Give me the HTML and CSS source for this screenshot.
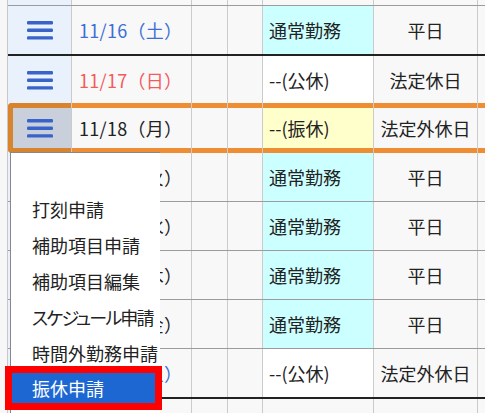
FILE: index.html
```html
<!DOCTYPE html>
<html lang="ja">
<head>
    <meta charset="UTF-8">
    <meta name="viewport" content="width=device-width, initial-scale=1">
    <title>勤務表</title>
    <link rel="stylesheet" href="styles.css">
</head>
<body>
    <div class="sheet">
        <div class="row edge-top">
            <div class="cell menu-btn"></div>
            <div class="cell"></div><div class="cell"></div><div class="cell"></div>
            <div class="cell"></div><div class="cell"></div><div class="cell"></div>
        </div>

        <div class="row week-end">
            <div class="cell menu-btn"><svg class="burger" width="26" height="19" viewBox="0 0 26 19"><rect y="0" width="26" height="3.4" rx="1.2"/><rect y="7.6" width="26" height="3.4" rx="1.2"/><rect y="15.2" width="26" height="3.4" rx="1.2"/></svg></div>
            <div class="cell date sat">11/16（土）</div>
            <div class="cell"></div><div class="cell"></div>
            <div class="cell work normal">通常勤務</div>
            <div class="cell type">平日</div>
            <div class="cell"></div>
        </div>

        <div class="row before-selected">
            <div class="cell menu-btn"><svg class="burger" width="26" height="19" viewBox="0 0 26 19"><rect y="0" width="26" height="3.4" rx="1.2"/><rect y="7.6" width="26" height="3.4" rx="1.2"/><rect y="15.2" width="26" height="3.4" rx="1.2"/></svg></div>
            <div class="cell date sun">11/17（日）</div>
            <div class="cell"></div><div class="cell"></div>
            <div class="cell work off">--(公休)</div>
            <div class="cell type">法定休日</div>
            <div class="cell"></div>
        </div>

        <div class="row selected">
            <div class="cell menu-btn"><svg class="burger" width="26" height="19" viewBox="0 0 26 19"><rect y="0" width="26" height="3.4" rx="1.2"/><rect y="7.6" width="26" height="3.4" rx="1.2"/><rect y="15.2" width="26" height="3.4" rx="1.2"/></svg></div>
            <div class="cell date">11/18（月）</div>
            <div class="cell"></div><div class="cell"></div>
            <div class="cell work sub">--(振休)</div>
            <div class="cell type">法定外休日</div>
            <div class="cell"></div>
        </div>

        <div class="row">
            <div class="cell menu-btn"></div>
            <div class="cell date">11/19（火）</div>
            <div class="cell"></div><div class="cell"></div>
            <div class="cell work normal">通常勤務</div>
            <div class="cell type">平日</div>
            <div class="cell"></div>
        </div>

        <div class="row">
            <div class="cell menu-btn"></div>
            <div class="cell date">11/20（水）</div>
            <div class="cell"></div><div class="cell"></div>
            <div class="cell work normal">通常勤務</div>
            <div class="cell type">平日</div>
            <div class="cell"></div>
        </div>

        <div class="row">
            <div class="cell menu-btn"></div>
            <div class="cell date">11/21（木）</div>
            <div class="cell"></div><div class="cell"></div>
            <div class="cell work normal">通常勤務</div>
            <div class="cell type">平日</div>
            <div class="cell"></div>
        </div>

        <div class="row">
            <div class="cell menu-btn"></div>
            <div class="cell date">11/22（金）</div>
            <div class="cell"></div><div class="cell"></div>
            <div class="cell work normal">通常勤務</div>
            <div class="cell type">平日</div>
            <div class="cell"></div>
        </div>

        <div class="row week-end">
            <div class="cell menu-btn"></div>
            <div class="cell date sat">11/23（土）</div>
            <div class="cell"></div><div class="cell"></div>
            <div class="cell work off">--(公休)</div>
            <div class="cell type">法定外休日</div>
            <div class="cell"></div>
        </div>

        <div class="row">
            <div class="cell menu-btn"></div>
            <div class="cell"></div><div class="cell"></div><div class="cell"></div>
            <div class="cell"></div><div class="cell"></div><div class="cell"></div>
        </div>
    </div>

    <!-- 11/18 の行メニュー -->
    <div class="menu">
        <div class="menu-item">打刻申請</div>
        <div class="menu-item">補助項目申請</div>
        <div class="menu-item">補助項目編集</div>
        <div class="menu-item tight">スケジュール申請</div>
        <div class="menu-item">時間外勤務申請</div>
        <div class="menu-item active">振休申請</div>
    </div>
</body>
</html>
```

FILE: styles.css
```css
body {
    margin: 0;
    background-color: #f7f7f7;
    font-family: "Noto Sans CJK JP", "Noto Sans", sans-serif;
    font-size: 18px;
    color: #222;
    overflow: hidden;
}
.sheet {
    margin-left: 7px;
    width: 560px;
    border-left: 1px solid #c8c8c8;
}
.row {
    display: grid;
    grid-template-columns: 64px 120px 36px 35px 111px 104px 1fr;
    height: 49px;
    border-bottom: 1px solid #9c9c9c;
    box-sizing: border-box;
}
.row.edge-top {
    height: 6px;
}
.row.week-end {
    height: 50px;
    border-bottom: 2px solid #222;
}
.row.before-selected {
    height: 47px;
    border-bottom: none;
}
.row.selected {
    height: 50px;
    border-bottom: none;
}
.cell {
    display: flex;
    align-items: center;
    min-width: 0;
    white-space: nowrap;
    overflow: hidden;
    background-color: #f8f8f8;
    border-right: 1px solid #cbcbcb;
}
.menu-btn {
    justify-content: center;
    background-color: #e9f1fd;
}
.burger {
    fill: #3a63c9;
    margin-top: 1px;
}
.date {
    padding-left: 7px;
    letter-spacing: 0.3px;
}
.date.sat {
    color: #3b6fd6;
}
.date.sun {
    color: #f55a5a;
}
.work {
    padding-left: 6px;
}
.work.normal {
    background-color: #ccffff;
}
.work.off {
    background-color: #fff;
}
.work.sub {
    background-color: #ffffcc;
}
.type {
    justify-content: center;
}
.row.selected .cell {
    box-shadow: inset 0 5px #ef8d33, inset 0 -5px #ef8d33;
}
.row.selected .menu-btn {
    background-color: #c9d0db;
    border-radius: 4px 0 0 4px;
    box-shadow: inset 5px 0 #d8842f, inset 0 5px #d8842f, inset 0 -5px #d8842f;
}
.menu {
    position: absolute;
    left: 10px;
    top: 152px;
    width: 150px;
    height: 280px;
    box-sizing: border-box;
    padding-top: 38px;
    background-color: #fff;
    border-left: 1px solid #888;
    border-top: 1px solid #888;
}
.menu-item {
    height: 36px;
    line-height: 36px;
    padding-left: 21px;
    white-space: nowrap;
}
.menu-item.tight {
    font-feature-settings: "palt";
    letter-spacing: -1.8px;
}
.menu-item.active {
    height: 30px;
    line-height: 30px;
    margin: 2px 5px 0 1px;
    padding-left: 20px;
    background-color: #1d67d3;
    color: #fff;
    outline: 7px solid #ff0000;
}
```
